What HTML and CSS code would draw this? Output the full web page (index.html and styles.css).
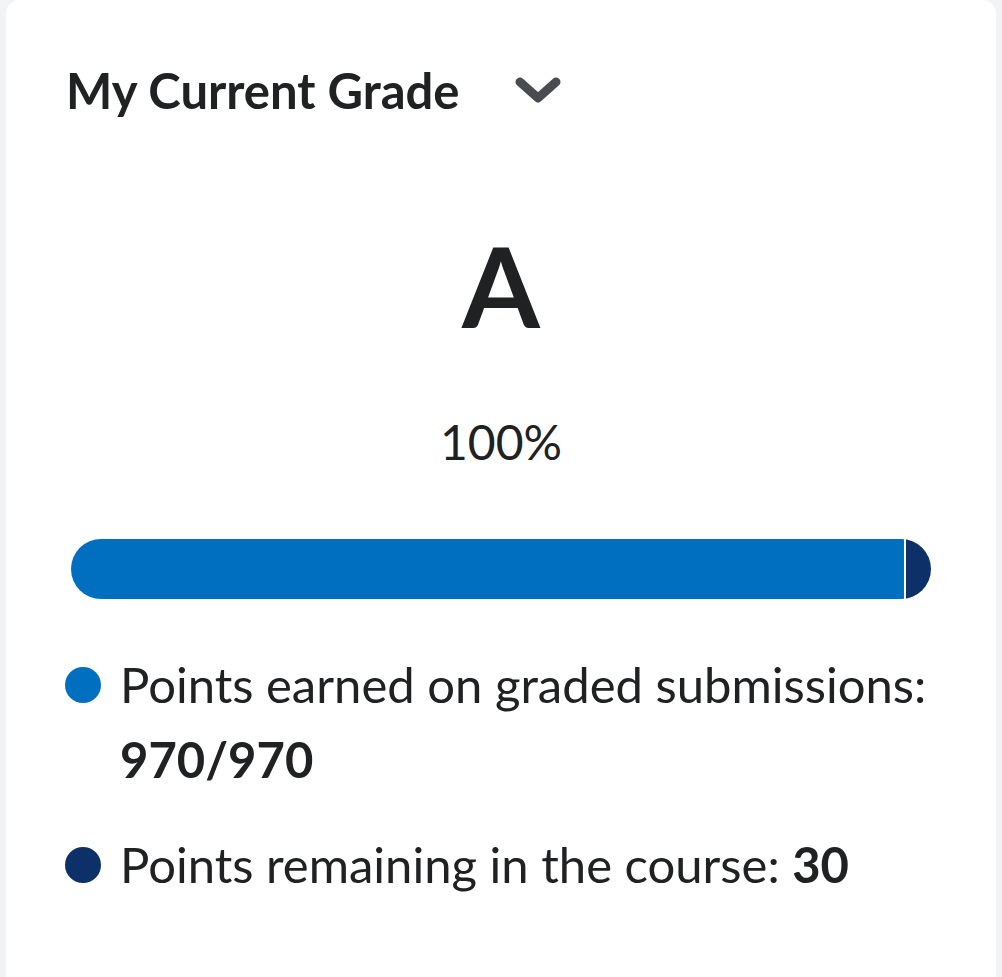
FILE: index.html
```html
<!DOCTYPE html>
<html lang="en">

<head>
	<meta charset="UTF-8">
	<title>My Current Grade</title>
	<meta name="viewport" content="width=device-width">
	<link rel="stylesheet" href="styles.css">
</head>

<body>
	<main class="card">
		<header class="cardHead">
			<h2>My Current Grade</h2>
			<button class="toggle" aria-label="Collapse">
				<svg width="46" height="27" viewBox="0 0 46 27">
					<polyline points="5,5 23,21 41,5" fill="none" stroke="#494c4e" stroke-width="9"
						stroke-linecap="round" stroke-linejoin="round" />
				</svg>
			</button>
		</header>
		<section class="grade">
			<div class="letter">A</div>
			<div class="percent">100%</div>
		</section>
		<div class="bar">
			<div class="earned"></div>
			<div class="remaining"></div>
		</div>
		<ul class="legend">
			<li><span class="dot earnedDot"></span>
				<p>Points earned on graded submissions: <b>970/970</b></p>
			</li>
			<li><span class="dot remainingDot"></span>
				<p>Points remaining in the course: <b>30</b></p>
			</li>
		</ul>
	</main>
</body>

</html>
```

FILE: styles.css
```css
html,
body {
	margin: 0;
	height: 100%;
	background: #f1f3f4;
}

body {
	font-family: Lato, "Noto Sans", sans-serif;
	color: #202122;
}

.card {
	box-sizing: border-box;
	min-height: 100%;
	margin: 0 6px;
	padding: 0 65px;
	background: #fff;
	border-radius: 14px 14px 0 0;
}

.cardHead {
	display: flex;
	align-items: center;
	gap: 56px;
	padding-top: 62px;
}

.cardHead h2 {
	margin: 0 0 0 -5px;
	font-size: 49px;
	font-weight: bold;
	line-height: 56px;
}

.toggle {
	padding: 0;
	border: 0;
	background: none;
	display: flex;
}

.grade {
	display: flex;
	flex-direction: column;
	align-items: center;
}

.letter {
	margin-top: 112px;
	font-size: 112px;
	font-weight: bold;
	line-height: 110px;
}

.percent {
	margin-top: 76px;
	font-size: 48px;
	line-height: 52px;
}

.bar {
	display: flex;
	gap: 2px;
	height: 60px;
	margin-top: 71px;
	border-radius: 30px;
	overflow: hidden;
}

.earned {
	flex: 1;
	background: #006fbf;
}

.remaining {
	width: 25px;
	background: #0c3067;
}

.legend {
	list-style: none;
	margin: 48px 0 0;
	padding: 0;
	font-size: 49px;
	line-height: 75px;
}

.legend li {
	display: flex;
	gap: 19px;
	margin-bottom: 30px;
}

.legend p {
	margin: 0;
}

.legend b {
	font-weight: bold;
}

.dot {
	flex: none;
	width: 36px;
	height: 36px;
	margin: 20px 0 0 -6px;
	border-radius: 50%;
}

.earnedDot {
	background: #006fbf;
}

.remainingDot {
	background: #0c3067;
}
```
